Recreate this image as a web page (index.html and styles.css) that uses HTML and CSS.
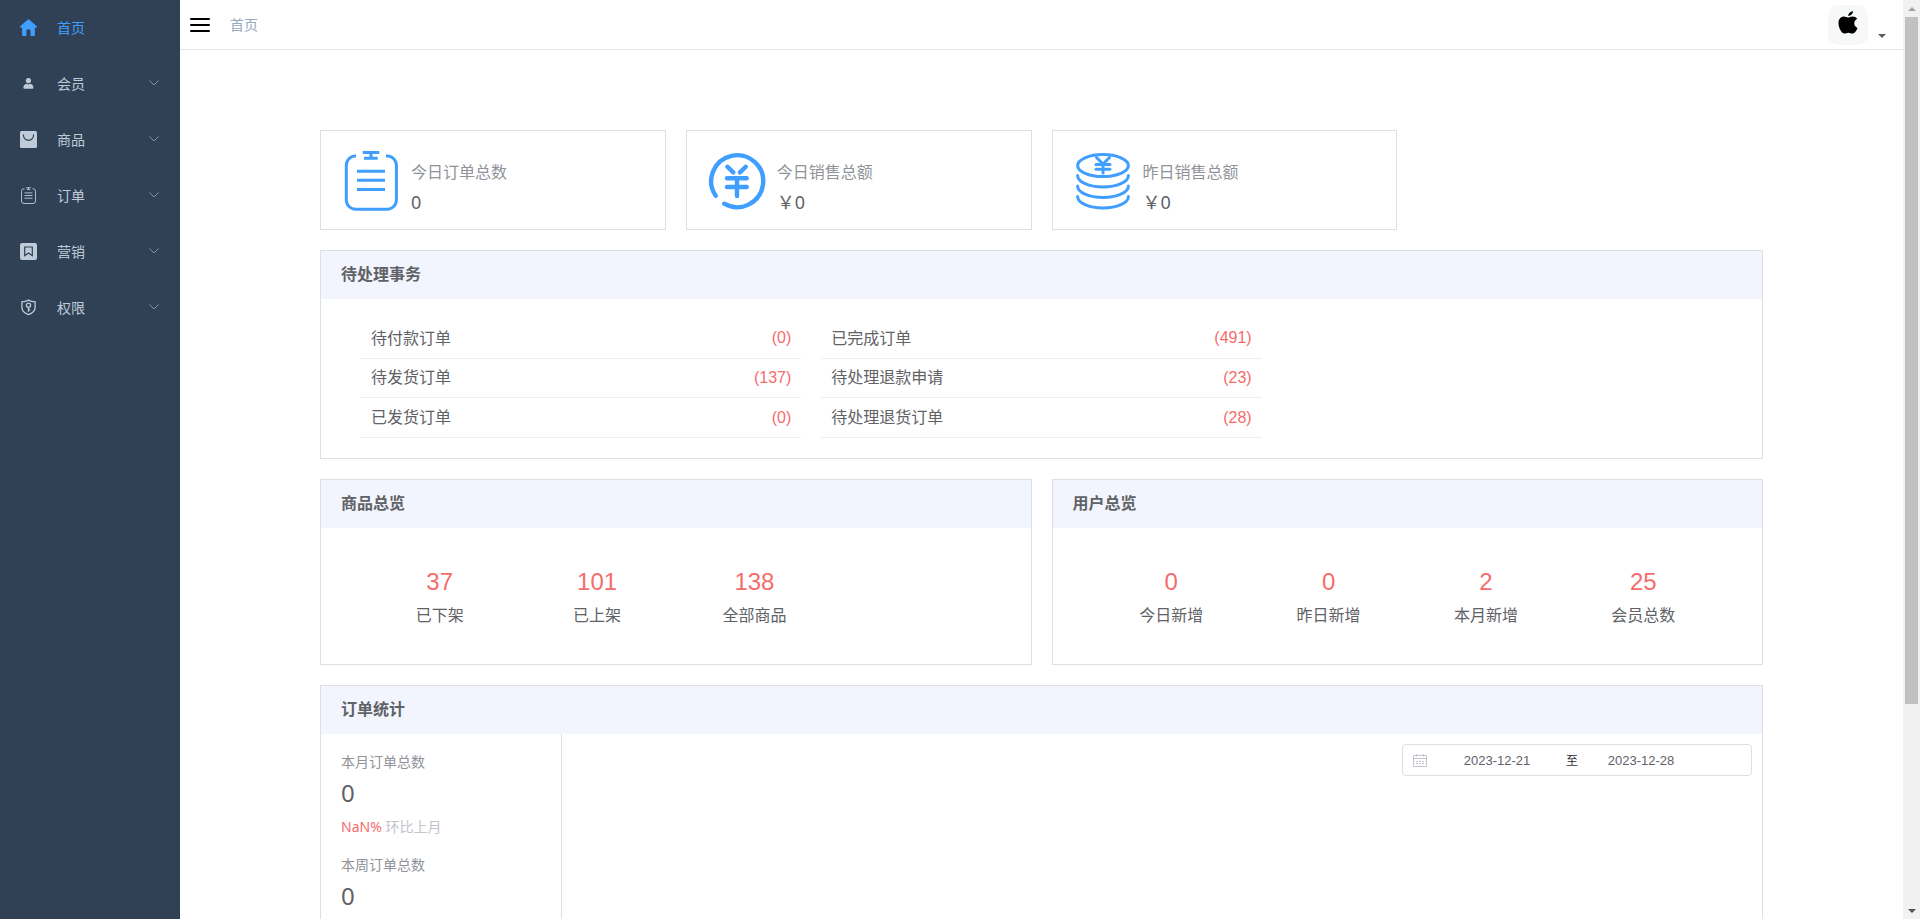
FILE: index.html
```html
<!DOCTYPE html>
<html lang="zh-CN">
<head>
<meta charset="utf-8">
<title>首页</title>
<link rel="stylesheet" href="styles.css">
</head>
<body>
<div class="app">
  <nav class="sidebar">
    <a class="menu-item active" href="#home">
      <svg class="menu-icon" viewBox="0 0 17 17"><path fill="currentColor" d="M7.9.5a1 1 0 0 1 1.2 0l7.4 6.6c.6.7.3 1.7-.7 1.7h-.9v7c0 .7-.4 1.1-1 1.1h-3.4v-5.2c0-.7-.5-1.200-1-1.200h-2c-.6 0-1.100.5-1.100 1.200v5.200H3.200c-.7 0-1.100-.4-1.100-1.100v-7h-.9C.2 8.800-.1 7.800.5 7.100z"/></svg>
      <span class="menu-text">首页</span>
    </a>
    <a class="menu-item" href="#member">
      <svg class="menu-icon" viewBox="0 0 17 17"><circle cx="8.400" cy="5.600" r="2.600" fill="currentColor"/><path fill="currentColor" d="M3.400 12.500c0-2.200 1.800-3.700 3.800-3.700l1.200.9 1.200-.9c2 0 3.800 1.500 3.800 3.700 0 .9-.4 1.300-1.200 1.300H4.600c-.8 0-1.200-.4-1.200-1.300z"/></svg>
      <span class="menu-text">会员</span>
      <svg class="chevron" viewBox="0 0 10 6"><path d="M.5.5 5 5 9.500.5"/></svg>
    </a>
    <a class="menu-item" href="#goods">
      <svg class="menu-icon" viewBox="0 0 17 17"><rect width="17" height="17" rx="1.500" fill="currentColor"/><path class="cut" d="M3.400 3.600c0 3.500 2.200 5.700 5.100 5.700s5.100-2.200 5.100-5.700"/></svg>
      <span class="menu-text">商品</span>
      <svg class="chevron" viewBox="0 0 10 6"><path d="M.5.5 5 5 9.500.5"/></svg>
    </a>
    <a class="menu-item" href="#order">
      <svg class="menu-icon line" viewBox="0 0 17 17"><path d="M4.500 1.700H4A2.500 2.500 0 0 0 1.500 4.200V14A2.500 2.500 0 0 0 4 16.500h9a2.500 2.500 0 0 0 2.500-2.500V4.200A2.500 2.500 0 0 0 13 1.700h-.5M6.200.7h4.600M6.800 2.400h3.400M8.500.7v1.700M4.500 5.900h8M4.500 8.500h8M4.500 11.200h8"/></svg>
      <span class="menu-text">订单</span>
      <svg class="chevron" viewBox="0 0 10 6"><path d="M.5.5 5 5 9.500.5"/></svg>
    </a>
    <a class="menu-item" href="#marketing">
      <svg class="menu-icon" viewBox="0 0 17 17"><rect width="17" height="17" rx="2" fill="currentColor"/><path class="cut" d="M4.700 4h7.600v8.700L8.500 10.100l-3.800 2.600z"/></svg>
      <span class="menu-text">营销</span>
      <svg class="chevron" viewBox="0 0 10 6"><path d="M.5.5 5 5 9.500.5"/></svg>
    </a>
    <a class="menu-item" href="#permission">
      <svg class="menu-icon line bold" viewBox="0 0 17 17"><path d="M8.500 1.100C6.400 2.300 4 2.800 1.900 2.900V8.500c0 3.500 3 5.700 6.600 7.100 3.600-1.400 6.600-3.600 6.600-7.100V2.900C13 2.800 10.600 2.300 8.500 1.100z"/><circle cx="8.500" cy="6.200" r="2.100"/><path d="M8.500 8.300v4.400M8.500 10.700h1.700"/></svg>
      <span class="menu-text">权限</span>
      <svg class="chevron" viewBox="0 0 10 6"><path d="M.5.5 5 5 9.500.5"/></svg>
    </a>
  </nav>

  <div class="main">
    <header class="navbar">
      <button class="hamburger" type="button" aria-label="菜单">
        <svg viewBox="0 0 20 16"><path d="M1 2h18M1 8h18M1 14h18"/></svg>
      </button>
      <span class="breadcrumb">首页</span>
      <button class="user" type="button" aria-label="用户">
        <span class="avatar">
          <svg viewBox="0 0 20 24"><path d="M16.300 12.600c0-2.200 1-3.700 2.900-4.900-1.100-1.500-2.700-2.300-4.600-2.300-2.100-.1-3.300 1.100-4.500 1.100-1.300 0-2.700-1.100-4.400-1C2.500 5.700.5 8.500.5 12c0 4.200 2.700 10.600 5.900 10.600 1.300 0 2.200-.9 3.900-.9s2.500.9 3.900.9c2.500 0 4.600-3.600 5.300-5.700-2.200-.9-3.200-2.500-3.200-4.300zM10.200 5c2.700 0 4.900-2.200 4.700-4.900C12.300.6 10.100 2.700 10.200 5z"/></svg>
        </span>
        <span class="caret"></span>
      </button>
    </header>

    <main class="dashboard">
      <section class="totals">
        <div class="card total">
          <svg class="total-icon" viewBox="0 0 60 60" stroke-width="3"><path d="M15 5h-.5a9.200 9.200 0 0 0-9.200 9.200V49a9.200 9.200 0 0 0 9.200 9.200h31.700a9.200 9.200 0 0 0 9.200-9.200V14.200A9.200 9.200 0 0 0 46.200 5H45M21.700 1.500h16.600M23 7.200h13.700M30 1.500v5.700M16 20.300h28M16 29.300h28M16 38.600h28"/></svg>
          <div class="total-body"><span class="total-label">今日订单总数</span><span class="total-value">0</span></div>
        </div>
        <div class="card total">
          <svg class="total-icon round" viewBox="0 0 60 60" stroke-width="4.400"><path d="M8.700 44.800A26 26 0 1 1 17.200 52.700M20.500 15.800l5.700 5.600M38.700 15.800l-5.700 5.600M20 27.300h19.700M20 36h19.700M30 27.300V45"/></svg>
          <div class="total-body"><span class="total-label">今日销售总额</span><span class="total-value">￥0</span></div>
        </div>
        <div class="card total">
          <svg class="total-icon round" viewBox="0 0 60 60" stroke-width="3"><ellipse cx="30" cy="14.600" rx="25.400" ry="11"/><path d="M4.600 24.500c0 6.500 11.400 11.500 25.400 11.500s25.400-5 25.400-11.500M4.600 35c0 6.500 11.400 11.500 25.400 11.500S55.400 41.500 55.400 35M4.600 45.500C4.600 52 16 57 30 57s25.400-5 25.400-11.500M23.500 6.500 30 13l6.500-6.500M23 13.600h14M23 18.200h14M30 13v9"/></svg>
          <div class="total-body"><span class="total-label">昨日销售总额</span><span class="total-value">￥0</span></div>
        </div>
      </section>

      <section class="card">
        <h2 class="card-title">待处理事务</h2>
        <div class="todo">
          <div class="todo-row"><span class="todo-name">待付款订单</span><span class="count">(0)</span></div>
          <div class="todo-row"><span class="todo-name">已完成订单</span><span class="count">(491)</span></div>
          <div class="todo-row first"><span class="todo-name">待发货订单</span><span class="count">(137)</span></div>
          <div class="todo-row"><span class="todo-name">待处理退款申请</span><span class="count">(23)</span></div>
          <div class="todo-row first"><span class="todo-name">已发货订单</span><span class="count">(0)</span></div>
          <div class="todo-row"><span class="todo-name">待处理退货订单</span><span class="count">(28)</span></div>
        </div>
      </section>

      <div class="overviews">
        <section class="card">
          <h2 class="card-title">商品总览</h2>
          <div class="overview">
            <div class="stat"><span class="stat-num">37</span><span>已下架</span></div>
            <div class="stat"><span class="stat-num">101</span><span>已上架</span></div>
            <div class="stat"><span class="stat-num">138</span><span>全部商品</span></div>
          </div>
        </section>
        <section class="card">
          <h2 class="card-title">用户总览</h2>
          <div class="overview">
            <div class="stat"><span class="stat-num">0</span><span>今日新增</span></div>
            <div class="stat"><span class="stat-num">0</span><span>昨日新增</span></div>
            <div class="stat"><span class="stat-num">2</span><span>本月新增</span></div>
            <div class="stat"><span class="stat-num">25</span><span>会员总数</span></div>
          </div>
        </section>
      </div>

      <section class="card">
        <h2 class="card-title">订单统计</h2>
        <div class="statistics">
          <div class="summary">
            <div class="summary-item">
              <span class="summary-label">本月订单总数</span>
              <span class="summary-value">0</span>
              <span class="summary-trend"><span class="rate">NaN%</span> 环比上月</span>
            </div>
            <div class="summary-item">
              <span class="summary-label">本周订单总数</span>
              <span class="summary-value">0</span>
            </div>
          </div>
          <div class="chart">
            <div class="date-range">
              <svg class="calendar" viewBox="0 0 14 14"><path d="M.5 2.500h13v11H.5zM.5 5.500h13M3.500 1v2.500M10.500 1v2.500M3 8.500h2M6 8.500h2M9 8.500h2M3 10.500h2M6 10.500h2M9 10.500h2"/></svg>
              <input class="date" type="text" aria-label="开始日期" value="2023-12-21">
              <span class="to">至</span>
              <input class="date" type="text" aria-label="结束日期" value="2023-12-28">
            </div>
          </div>
        </div>
      </section>
    </main>
  </div>

  <div class="scrollbar" aria-hidden="true">
    <span class="arrow up"></span>
    <span class="track"><span class="thumb"></span></span>
    <span class="arrow down"></span>
  </div>
</div>
</body>
</html>
```
FILE: styles.css
```css
* { box-sizing: border-box; }

body {
  margin: 0;
  font-family: "Noto Sans CJK SC", "Noto Sans", sans-serif;
  font-size: 16px;
  color: #606266;
  background: #fff;
}

button {
  padding: 0;
  border: 0;
  background: none;
}

svg { flex: none; fill: none; }

.app {
  display: flex;
  height: 100vh;
  overflow: hidden;
}

/* Sidebar */
.sidebar {
  flex: none;
  width: 180px;
  background: #304156;
}

.menu-item {
  display: flex;
  align-items: center;
  height: 56px;
  padding: 0 20px 2px;
  font-size: 14px;
  color: #bfcbd9;
  text-decoration: none;
}

.menu-item.active { color: #409eff; }

.menu-icon {
  width: 17px;
  height: 17px;
  margin-right: 20px;
}

.menu-icon .cut { stroke: #304156; stroke-width: 1.2; }
.menu-icon.line { stroke: currentColor; stroke-width: 0.9; }
.menu-icon.bold { stroke-width: 1.3; }
.menu-text { flex: 1; }

.chevron {
  width: 10px;
  height: 6px;
  margin-right: 1px;
  stroke: #909399;
}

/* Top bar */
.main {
  display: flex;
  flex: 1;
  flex-direction: column;
  min-width: 0;
}

.navbar {
  display: flex;
  flex: none;
  align-items: center;
  height: 50px;
  padding: 0 17px 0 10px;
  border-bottom: 1px solid #e6e6e6;
}

.hamburger { display: flex; }

.hamburger svg {
  width: 20px;
  height: 16px;
  stroke: #000;
  stroke-width: 2;
  stroke-linecap: round;
}

.breadcrumb {
  margin-left: 20px;
  padding-bottom: 2px;
  font-size: 14px;
  color: #97a8be;
}

.user {
  display: flex;
  align-items: flex-end;
  gap: 10px;
  margin-left: auto;
}

.avatar {
  display: flex;
  justify-content: center;
  width: 40px;
  height: 40px;
  padding-top: 6px;
  border-radius: 10px;
  background: #f7f9f9;
}

.avatar svg { width: 20px; height: 24px; fill: #000; }

.caret {
  margin-bottom: 7px;
  border: 4px solid transparent;
  border-top-color: #5a5e66;
  border-bottom: 0;
}

/* Dashboard */
.dashboard {
  display: flex;
  flex-direction: column;
  gap: 20px;
  padding: 80px 140px;
}

.card { border: 1px solid #dcdfe6; }

.card-title {
  margin: 0;
  padding: 10px 20px 14px;
  font-size: 16px;
  line-height: 24px;
  background: #f2f5fd;
}

.totals {
  display: grid;
  grid-template-columns: repeat(4, 1fr);
  gap: 20px;
}

.total {
  display: flex;
  align-items: center;
  gap: 10px;
  height: 100px;
  padding: 2px 20px 0;
}

.total-icon { width: 60px; height: 60px; stroke: #409eff; }
.total-icon.round { stroke-linecap: round; }

.total-body {
  display: flex;
  flex-direction: column;
  gap: 4px;
  padding-top: 12px;
}

.total-label { line-height: 26px; color: #909399; }

.total-value {
  font-family: "Noto Sans", "Noto Sans CJK SC", sans-serif;
  font-size: 18px;
  line-height: 28px;
}

.todo {
  display: grid;
  grid-template-columns: repeat(3, 1fr);
  grid-auto-rows: 1fr;
  column-gap: 20px;
  min-height: 159px;
  padding: 20px 40px;
}

.todo-row {
  display: flex;
  align-items: center;
  justify-content: space-between;
  padding: 0 10px;
  border-bottom: 1px solid #ebeef5;
  line-height: 24px;
}

.todo-row.first { grid-column: 1; }
.todo-name { padding-bottom: 3px; }

.count {
  font-family: "Liberation Sans", Arial, sans-serif;
  color: #f56c6c;
}

.overviews {
  display: grid;
  grid-template-columns: 1fr 1fr;
  gap: 20px;
}

.overview {
  display: grid;
  grid-template-columns: repeat(4, 1fr);
  padding: 38px 40px 34px;
}

.stat {
  display: flex;
  flex-direction: column;
  align-items: center;
  line-height: 32px;
}

.stat-num {
  font-family: "Liberation Sans", Arial, sans-serif;
  font-size: 24px;
  color: #f56c6c;
}

.statistics { display: flex; min-height: 400px; }

.summary {
  display: flex;
  flex: none;
  flex-direction: column;
  gap: 15px;
  width: 241px;
  padding: 17px 20px;
  border-right: 1px solid #dcdfe6;
}

.summary-item { display: flex; flex-direction: column; font-size: 14px; }
.summary-label { line-height: 20px; color: #909399; }

.summary-value {
  font-family: "Noto Sans", sans-serif;
  font-size: 24px;
  line-height: 44px;
}

.summary-trend {
  font-family: "Noto Sans", "Noto Sans CJK SC", sans-serif;
  line-height: 24px;
  color: #c0c4cc;
}

.rate { color: #f56c6c; }

.chart {
  display: flex;
  flex: 1;
  align-items: flex-start;
  justify-content: flex-end;
  padding: 10px;
}

.date-range {
  display: flex;
  align-items: center;
  width: 350px;
  height: 32px;
  padding: 0 10px;
  border: 1px solid #dcdfe6;
  border-radius: 4px;
  font-size: 13px;
}

.calendar {
  width: 14px;
  height: 14px;
  margin-right: 9px;
  stroke: #c0c4cc;
}

.date {
  width: 122px;
  padding: 0;
  border: 0;
  font: 13px "Liberation Sans", Arial, sans-serif;
  color: #606266;
  text-align: center;
  background: none;
}

.to {
  width: 22px;
  padding: 0 0 2px 6px;
  font-size: 12px;
  color: #303133;
  text-align: center;
}

/* Scrollbar */
.scrollbar {
  display: flex;
  flex: none;
  flex-direction: column;
  width: 17px;
  background: #f1f1f1;
}

.arrow {
  display: flex;
  align-items: center;
  justify-content: center;
  height: 17px;
}

.arrow::before { content: ""; border: 4px solid transparent; }
.arrow.up::before { border-top: 0; border-bottom-color: #a3a3a3; }
.arrow.down::before { border-bottom: 0; border-top-color: #505050; }

.track { flex: 1; padding: 0 2px; }

.thumb {
  display: block;
  height: 77.6%;
  background: #c1c1c1;
}
```
